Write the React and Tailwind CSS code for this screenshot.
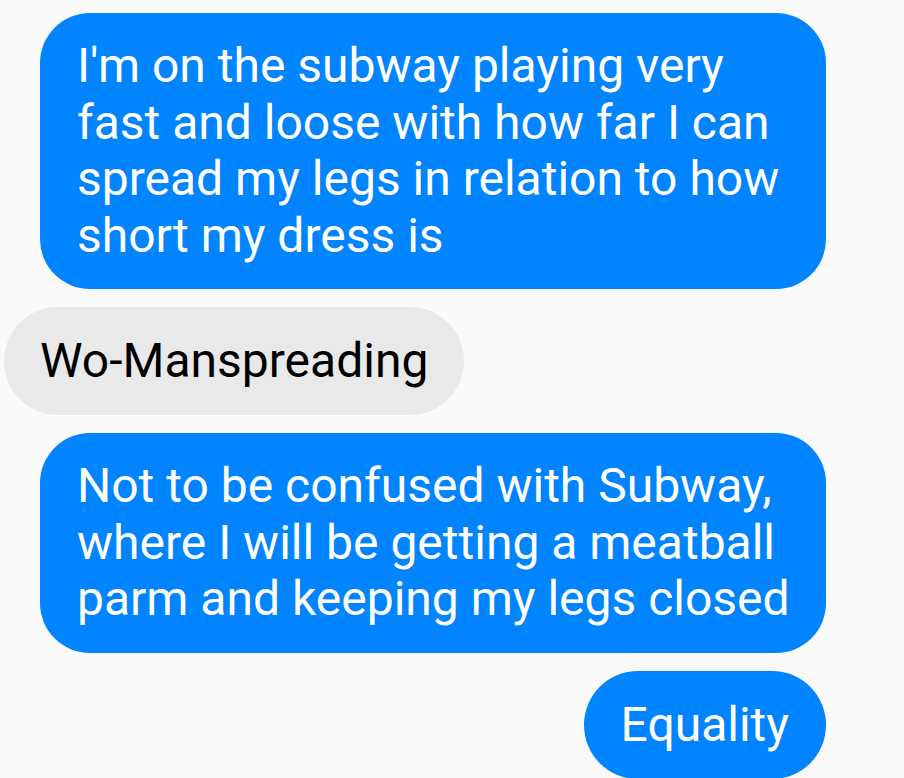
export default function App() {
  const font = { fontFamily: 'Roboto, "Noto Sans", sans-serif' };
  return (
    <div className="w-[904px] h-[778px] overflow-hidden bg-[#fafafa]" style={font}>
      <div className="flex flex-col pt-[13px] pl-[4px] pr-[78px] gap-[18px]">
        <div className="flex justify-end">
          <div className="w-[786px] bg-[#0084ff] text-white rounded-[50px] pl-[37px] pr-[32px] py-[25px] text-[48px] leading-[56.5px]">
            I'm on the subway playing very fast and loose with how far I can spread my legs in relation to how short my dress is
          </div>
        </div>
        <div className="flex justify-start">
          <div className="bg-[#e9e9e9] text-black rounded-full px-[36px] py-[25px] text-[48px] leading-[58px]">
            Wo-Manspreading
          </div>
        </div>
        <div className="flex justify-end">
          <div className="w-[786px] bg-[#0084ff] text-white rounded-[50px] pl-[37px] pr-[32px] py-[25px] text-[48px] leading-[56.5px]">
            Not to be confused with Subway, where I will be getting a meatball parm and keeping my legs closed
          </div>
        </div>
        <div className="flex justify-end">
          <div className="bg-[#0084ff] text-white rounded-full px-[37px] py-[25px] text-[48px] leading-[58px]">
            Equality
          </div>
        </div>
      </div>
    </div>
  );
}
